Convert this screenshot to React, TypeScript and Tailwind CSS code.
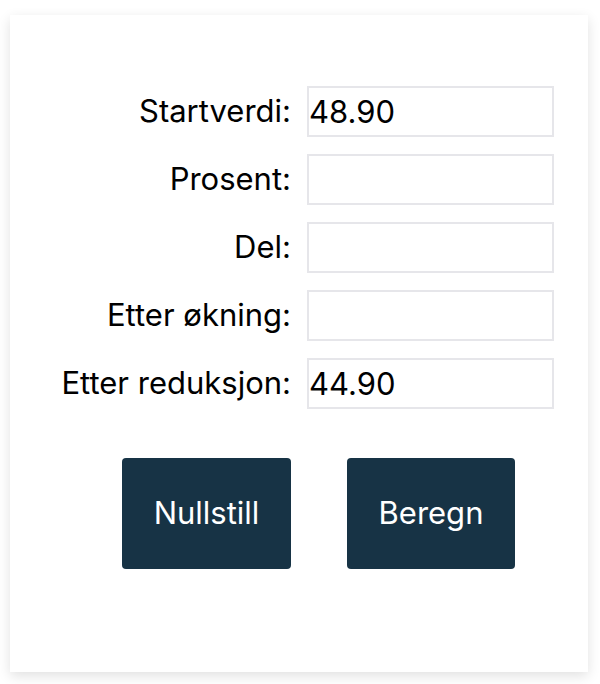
const fields = [
  { label: "Startverdi:", value: "48.90" },
  { label: "Prosent:", value: "" },
  { label: "Del:", value: "" },
  { label: "Etter økning:", value: "" },
  { label: "Etter reduksjon:", value: "44.90" },
]

export default function App() {
  return (
    <div className="min-h-screen bg-white pt-[15px] px-[10px] font-['Inter',sans-serif] text-black">
      <div className="h-[657px] w-[578px] bg-white pt-[71px] shadow-[0_4px_12px_rgba(0,0,0,0.12)]">
        <div className="grid grid-cols-[281px_247px] gap-x-4 gap-y-[17px]">
          {fields.map((f) => (
            <div key={f.label} className="contents">
              <label className="flex h-[51px] items-center justify-end text-[31px]">{f.label}</label>
              <input
                defaultValue={f.value}
                className="h-[51px] w-[247px] border-2 border-[#e6e6ea] bg-white px-0 text-[31px] outline-none"
              />
            </div>
          ))}
        </div>
        <div className="mt-[49px] flex gap-[56px] pl-[112px]">
          <button className="h-[111px] w-[169px] rounded-[4px] bg-[#173345] text-[31px] text-white">
            Nullstill
          </button>
          <button className="h-[111px] w-[168px] rounded-[4px] bg-[#173345] text-[31px] text-white">
            Beregn
          </button>
        </div>
      </div>
    </div>
  )
}
